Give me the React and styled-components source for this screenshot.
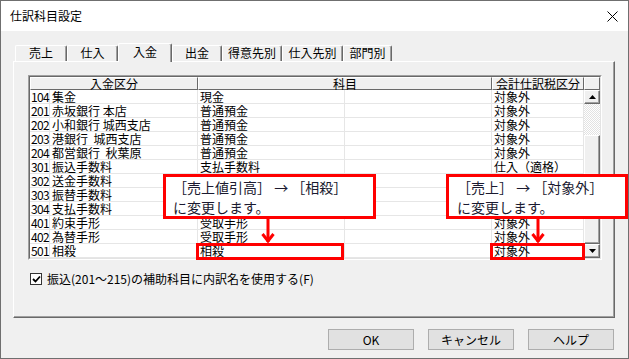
import React from "react";
import styled, { createGlobalStyle } from "styled-components";

const Global = createGlobalStyle`
  html, body { margin: 0; padding: 0; background: #f0f0f0; }
  * { box-sizing: border-box; }
`;

const FONT = `"Noto Sans CJK JP", "Noto Sans", sans-serif`;

const Window = styled.div`
  position: relative;
  width: 629px;
  height: 359px;
  border: 1px solid #6f6f6f;
  background: #f0f0f0;
  display: flex;
  flex-direction: column;
  font-family: ${FONT};
  font-size: 12px;
  color: #000;
  overflow: hidden;
`;

const TitleBar = styled.div`
  height: 30px;
  flex: none;
  background: #fff;
  display: flex;
  align-items: center;
  justify-content: space-between;
  padding: 0 10px 0 9px;
  font-size: 12px;
  line-height: 14px;
`;

const Content = styled.div`
  display: flex;
  flex-direction: column;
  padding: 12px 13px 0 12px;
`;

const TabStrip = styled.div`
  display: flex;
  align-items: flex-end;
  height: 18px;
  margin-left: 2px;
`;

const Tab = styled.div`
  width: ${(p) => p.$w}px;
  height: ${(p) => (p.$active ? 19 : 16)}px;
  margin-bottom: ${(p) => (p.$active ? -1 : 0)}px;
  position: relative;
  z-index: ${(p) => (p.$active ? 2 : 0)};
  background: #f0f0f0;
  border-top: 1px solid #fff;
  border-left: 1px solid #fff;
  border-right: 1px solid #696969;
  box-shadow: inset -1px 0 #a0a0a0;
  border-radius: 2px 2px 0 0;
  display: flex;
  justify-content: center;
  padding-top: ${(p) => (p.$active ? 1 : 0)}px;
  font-size: 12px;
  line-height: 14px;
`;

const Panel = styled.div`
  height: 257px;
  border-top: 1px solid #fff;
  border-left: 1px solid #fff;
  border-right: 1px solid #696969;
  border-bottom: 1px solid #696969;
  box-shadow: inset -1px -1px #a0a0a0;
  padding: 13px 0 0 14px;
  display: flex;
  flex-direction: column;
`;

const GridOuter = styled.div`
  width: 574px;
  border-top: 1px solid #a0a0a0;
  border-left: 1px solid #a0a0a0;
  border-right: 1px solid #fff;
  border-bottom: 1px solid #fff;
`;

const GridInner = styled.div`
  border-top: 1px solid #696969;
  border-left: 1px solid #696969;
  border-right: 1px solid #e3e3e3;
  border-bottom: 1px solid #e3e3e3;
  background: #fff;
`;

const HeaderRow = styled.div`
  display: flex;
  height: 13px;
`;

const HeadCell = styled.div`
  width: ${(p) => p.$w}px;
  height: 13px;
  background: #f0f0f0;
  border-top: 1px solid #fff;
  border-left: 1px solid #fff;
  border-right: 1px solid #696969;
  border-bottom: 1px solid #696969;
  display: flex;
  align-items: center;
  justify-content: center;
  font-size: 12px;
  line-height: 12px;
  white-space: nowrap;
`;

const GridBody = styled.div`
  display: flex;
`;

const Rows = styled.div`
  width: 554px;
  display: flex;
  flex-direction: column;
`;

const Row = styled.div`
  display: grid;
  grid-template-columns: 20px 148px 147px 147px 92px;
  height: 14px;
`;

const Cell = styled.div`
  height: 14px;
  border-right: 1px solid #e6e6e6;
  border-bottom: 1px solid #e6e6e6;
  padding-left: ${(p) => p.$pad ?? 2}px;
  display: flex;
  align-items: center;
  font-size: 12px;
  line-height: 12px;
  white-space: pre;
  letter-spacing: ${(p) => p.$ls ?? 0}px;
`;

const ScrollBar = styled.div`
  width: 16px;
  display: flex;
  flex-direction: column;
`;

const ScrollBtn = styled.div`
  height: ${(p) => p.$h}px;
  background: #f0f0f0;
  border-top: 1px solid #fff;
  border-left: 1px solid #fff;
  border-right: 1px solid #696969;
  border-bottom: 1px solid #696969;
  box-shadow: inset -1px -1px #a0a0a0;
  display: flex;
  align-items: center;
  justify-content: center;
`;

const ScrollTrack = styled.div`
  height: ${(p) => p.$h}px;
  background: repeating-conic-gradient(#ffffff 0 25%, #e2e2e2 0 50%) 0 0 / 2px 2px;
`;

const CheckRow = styled.div`
  display: flex;
  align-items: center;
  gap: 5px;
  margin: 12px 0 0 2px;
  font-size: 12px;
  line-height: 14px;
`;

const CheckBox = styled.div`
  width: 12px;
  height: 12px;
  background: #fff;
  border: 1px solid #333;
  display: flex;
  align-items: center;
  justify-content: center;
`;

const ButtonRow = styled.div`
  display: flex;
  justify-content: flex-end;
  gap: 14px;
  margin-top: 11px;
  padding-right: 1px;
`;

const Button = styled.div`
  width: 86px;
  height: 21px;
  background: #e1e1e1;
  border: 1px solid #adadad;
  display: flex;
  align-items: center;
  justify-content: center;
  font-size: 12px;
  line-height: 14px;
`;

const Callout = styled.div`
  position: absolute;
  left: ${(p) => p.$x}px;
  top: ${(p) => p.$y}px;
  width: ${(p) => p.$w}px;
  height: ${(p) => p.$h}px;
  border: 3px solid #ff0000;
  background: ${(p) => (p.$fill ? "#fff" : "transparent")};
  padding: 0 0 0 ${(p) => p.$pad ?? 6}px;
  font-size: 14px;
  line-height: 20px;
  color: #1a1a30;
  white-space: pre;
  z-index: 5;
`;

const Arrow = styled.svg`
  position: absolute;
  left: ${(p) => p.$x}px;
  top: ${(p) => p.$y}px;
  z-index: 6;
`;

const tabs = [
  ["売上", 52],
  ["仕入", 51],
  ["入金", 54, true],
  ["出金", 50],
  ["得意先別", 60],
  ["仕入先別", 61],
  ["部門別", 49],
];

const rows = [
  ["104", "集金", "現金", "対象外"],
  ["201", "赤坂銀行 本店", "普通預金", "対象外"],
  ["202", "小和銀行 城西支店", "普通預金", "対象外"],
  ["203", "港銀行  城西支店", "普通預金", "対象外"],
  ["204", "都営銀行  秋葉原", "普通預金", "対象外"],
  ["301", "振込手数料", "支払手数料", "仕入（適格）"],
  ["302", "送金手数料", "", ""],
  ["303", "振替手数料", "", ""],
  ["304", "支払手数料", "", ""],
  ["401", "約束手形", "受取手形", "対象外"],
  ["402", "為替手形", "受取手形", "対象外"],
  ["501", "相殺", "相殺", "対象外"],
];

const DownArrow = ({ x, y }) => (
  <Arrow $x={x} $y={y} width="14" height="26" viewBox="0 0 14 26">
    <line x1="7" y1="0" x2="7" y2="24" stroke="#ff0000" strokeWidth="3" />
    <polyline points="1.5,16 7,23 12.5,16" fill="none" stroke="#ff0000" strokeWidth="3" />
  </Arrow>
);

export default function App() {
  return (
    <>
      <Global />
      <Window>
        <TitleBar>
          <span>仕訳科目設定</span>
          <svg width="11" height="11" viewBox="0 0 11 11">
            <path d="M0.5 0.5 L10.5 10.5 M10.5 0.5 L0.5 10.5" stroke="#000" strokeWidth="1" />
          </svg>
        </TitleBar>
        <Content>
          <TabStrip>
            {tabs.map(([t, w, a]) => (
              <Tab key={t} $w={w} $active={a}>
                {t}
              </Tab>
            ))}
          </TabStrip>
          <Panel>
            <GridOuter>
              <GridInner>
                <HeaderRow>
                  <HeadCell $w={168}>入金区分</HeadCell>
                  <HeadCell $w={294}>科目</HeadCell>
                  <HeadCell $w={92}>会計仕訳税区分</HeadCell>
                  <HeadCell $w={16} />
                </HeaderRow>
                <GridBody>
                  <Rows>
                    {rows.map((r) => (
                      <Row key={r[0]}>
                        <Cell $pad={1} $ls={-0.6}>{r[0]}</Cell>
                        <Cell>{r[1]}</Cell>
                        <Cell>{r[2]}</Cell>
                        <Cell />
                        <Cell>{r[3]}</Cell>
                      </Row>
                    ))}
                  </Rows>
                  <ScrollBar>
                    <ScrollBtn $h={14}>
                      <svg width="7" height="4" viewBox="0 0 7 4">
                        <path d="M3.5 0 L7 4 L0 4 Z" fill="#000" />
                      </svg>
                    </ScrollBtn>
                    <ScrollTrack $h={31} />
                    <ScrollBtn $h={109} />
                    <ScrollBtn $h={14}>
                      <svg width="7" height="4" viewBox="0 0 7 4">
                        <path d="M0 0 L7 0 L3.5 4 Z" fill="#000" />
                      </svg>
                    </ScrollBtn>
                  </ScrollBar>
                </GridBody>
              </GridInner>
            </GridOuter>
            <CheckRow>
              <CheckBox>
                <svg width="9" height="9" viewBox="0 0 9 9">
                  <polyline points="1,4 3.5,6.5 8,1.5" fill="none" stroke="#000" strokeWidth="1.8" />
                </svg>
              </CheckBox>
              <span>振込(201～215)の補助科目に内訳名を使用する(F)</span>
            </CheckRow>
          </Panel>
          <ButtonRow>
            <Button>OK</Button>
            <Button>キャンセル</Button>
            <Button>ヘルプ</Button>
          </ButtonRow>
        </Content>

        <Callout $x={162} $y={173} $w={213} $h={45} $fill $pad={7}>
          {"［売上値引高］ → ［相殺］\nに変更します。"}
        </Callout>
        <DownArrow x={260} y={217} />
        <Callout $x={195} $y={242} $w={148} $h={17} />

        <Callout $x={445} $y={173} $w={182} $h={45} $fill $pad={8}>
          {"［売上］ → ［対象外］\nに変更します。"}
        </Callout>
        <DownArrow x={530} y={217} />
        <Callout $x={489} $y={242} $w={95} $h={17} />
      </Window>
    </>
  );
}
